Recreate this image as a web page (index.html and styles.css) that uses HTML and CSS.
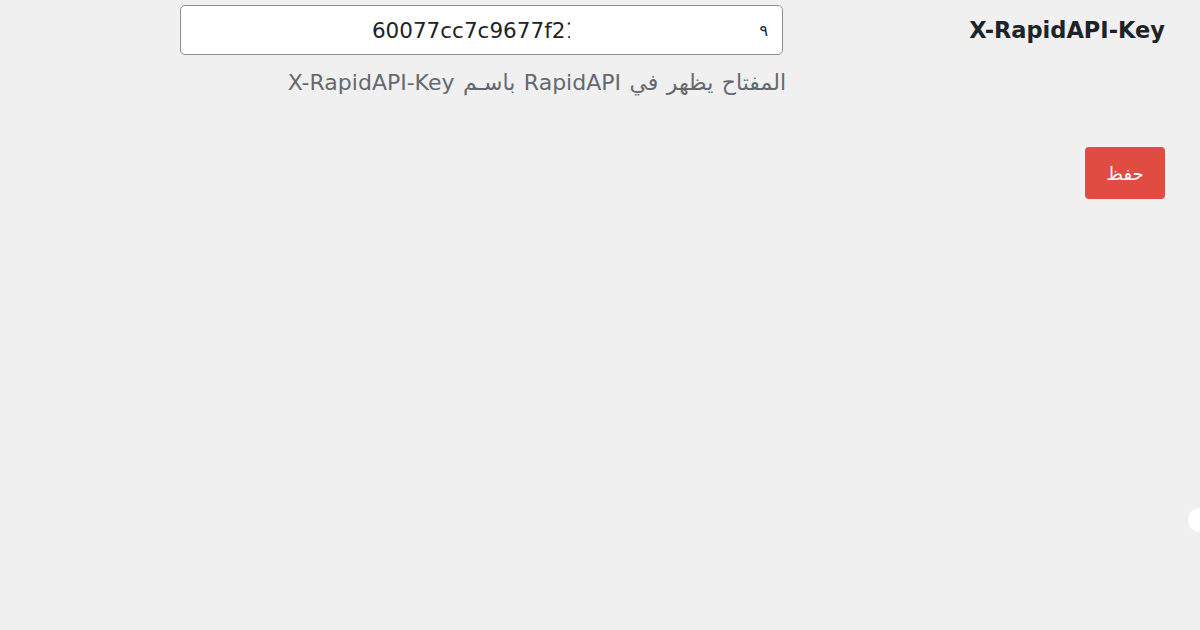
FILE: index.html
```html
<!DOCTYPE html>
<html lang="ar" dir="rtl">

<head>
    <meta charset="UTF-8">
    <meta name="viewport" content="width=device-width, initial-scale=1.0">
    <title>الإعدادات</title>
    <link rel="stylesheet" href="styles.css">
</head>

<body>
    <div class="settings">
        <div class="form-row">
            <div class="form-label">X-RapidAPI-Key</div>
            <div class="form-field">
                <div class="key-input">
                    <span class="key-tail">٩</span>
                    <span class="key-value">60077cc7c9677f2<span class="key-cut">1</span></span>
                </div>
                <p class="description">المفتاح يظهر في RapidAPI باسـم X-RapidAPI-Key</p>
            </div>
        </div>

        <div class="submit-row">
            <button class="save-btn">حفظ</button>
        </div>
    </div>

    <!-- floating handle at the right edge -->
    <div class="side-dot"></div>
</body>

</html>
```

FILE: styles.css
```css
html, body {
    margin: 0;
    padding: 0;
}

body {
    background-color: #f0f0f1;
    font-family: 'DejaVu Sans', sans-serif;
    color: #1d2327;
    width: 1200px;
    height: 630px;
    overflow: hidden;
    position: relative;
}

.settings {
    padding: 5px 35px 0 0;
}

.form-row {
    display: flex;
    align-items: flex-start;
}

.form-label {
    width: 382px;
    font-weight: bold;
    font-size: 22.5px;
    line-height: 50px;
    direction: ltr;
    text-align: right;
}

.form-field {
    width: 603px;
}

.key-input {
    box-sizing: border-box;
    height: 50px;
    background: #fff;
    border: 1px solid #8c8f94;
    border-radius: 5px;
    display: flex;
    align-items: center;
    padding: 0 14px;
    font-size: 21.5px;
    overflow: hidden;
}

.key-tail {
    font-size: 16px;
}

.key-value {
    margin-right: 189px;
    direction: ltr;
}

.key-cut {
    display: inline-block;
    width: 5px;
    overflow: hidden;
    vertical-align: bottom;
}

.description {
    margin: 13px -3px 0 0;
    font-size: 22px;
    word-spacing: 1.5px;
    color: #646970;
    line-height: 30px;
}

.submit-row {
    margin-top: 49px;
    display: flex;
}

.save-btn {
    width: 80px;
    height: 52px;
    border: none;
    border-radius: 4px;
    background-color: #e04c42;
    color: #fff;
    font-family: 'DejaVu Sans', sans-serif;
    font-size: 18px;
    cursor: pointer;
}

.side-dot {
    position: absolute;
    right: -12px;
    top: 508px;
    width: 24px;
    height: 24px;
    border-radius: 50%;
    background: #fff;
}
```
